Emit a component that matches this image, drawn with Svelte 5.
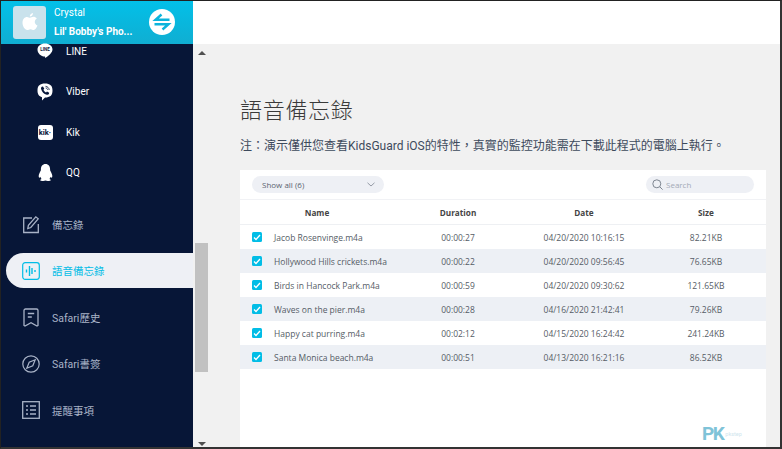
<script>
	const apps = [
		{ name: "LINE", icon: "line" },
		{ name: "Viber", icon: "viber" },
		{ name: "Kik", icon: "kik" },
		{ name: "QQ", icon: "qq" }
	];
	const tools = [
		{ name: "備忘錄", icon: "note" },
		{ name: "語音備忘錄", icon: "voice", active: true },
		{ name: "Safari歷史", icon: "history" },
		{ name: "Safari書簽", icon: "compass" },
		{ name: "提醒事項", icon: "list" }
	];
	const files = [
		["Jacob Rosenvinge.m4a", "00:00:27", "04/20/2020 10:16:15", "82.21KB"],
		["Hollywood Hills crickets.m4a", "00:00:22", "04/20/2020 09:56:45", "76.65KB"],
		["Birds in Hancock Park.m4a", "00:00:59", "04/20/2020 09:30:62", "121.65KB"],
		["Waves on the pier.m4a", "00:00:28", "04/16/2020 21:42:41", "79.26KB"],
		["Happy cat purring.m4a", "00:02:12", "04/15/2020 16:24:42", "241.24KB"],
		["Santa Monica beach.m4a", "00:00:51", "04/13/2020 16:21:16", "86.52KB"]
	];
</script>

<div class="window">
	<aside class="sidebar">
		<header class="device">
			<div class="device-logo">
				<svg width="16" height="18" viewBox="0 0 16 18"><path fill="#fff" d="M11 0c.1 1.600-1.300 3.600-3.200 3.600C7.600 2 9.200.2 11 0zM8 4.700c.8 0 1.900-.9 3.400-.9 1.200 0 2.600.6 3.400 1.800-3 1.800-2.500 5.700.7 7-.8 2-2.200 4.400-3.800 4.400-1.200 0-1.600-.8-3.200-.8s-2 .8-3.200.8C2.800 17 .5 13 .5 9.700.5 6 2.800 3.900 5 3.900c1.300 0 2.300.8 3 .8z"/></svg>
			</div>
			<div class="device-text">
				<div class="device-user">Crystal</div>
				<div class="device-name">Lil' Bobby's Pho...</div>
			</div>
			<div class="switch">
				<svg width="26" height="26" viewBox="0 0 26 26">
					<circle cx="13" cy="13" r="13" fill="#fff" />
					<path d="M20.500 10.800H6.500L12.500 5.500M5.500 15.200h14L13.500 20.500" fill="none" stroke="#0cb4dc" stroke-width="2.400" />
				</svg>
			</div>
		</header>
		<nav class="nav">
			<div class="apps">
				{#each apps as app}
					<div class="app">
						<span class="app-icon">
							{#if app.icon === "line"}
								<svg width="16" height="16" viewBox="0 0 16 16"><path fill="#fff" d="M8 .5c4.200 0 7.500 2.600 7.500 5.900 0 3-3.500 6-7 8.300-.6.300-.6-.4-.5-1.200C3.800 13.300.500 10.200.500 6.400.5 3.100 3.800.5 8 .5z"/><text x="8" y="8.200" class="line-text">LINE</text></svg>
							{:else if app.icon === "viber"}
								<svg width="16" height="18" viewBox="0 0 16 18"><path fill="#fff" d="M8 .5c5 0 7.500 2 7.500 7s-2.500 7-7.500 7l-3 3v-3.300C2 13.200.5 11.500.5 7.500.5 2.500 3 .5 8 .5z"/><path fill="#07173a" d="M4.800 3.800l1.200-.3 1.300 2.300-.9 1c.5 1.200 1.400 2.100 2.600 2.600l1-.9 2.200 1.300-.3 1.200c-.4.700-1.300.9-2.100.7C6.800 11 4.900 9.100 4.100 6c-.2-.9 0-1.800.7-2.200z"/><path fill="none" stroke="#07173a" stroke-width=".8" d="M8.500 3.300c2 .2 3.500 1.500 3.700 3.700M8.700 4.900c1 .1 1.800.9 1.900 1.900"/></svg>
							{:else if app.icon === "kik"}
								<span class="kik">kik·</span>
							{:else if app.icon === "qq"}
								<svg width="15" height="18" viewBox="0 0 15 18"><path fill="#fff" d="M7.500 0c3 0 4.600 2.300 4.600 5.300 0 .7 0 1 .2 1.500.9 1.600 2 3.700 2 5.300 0 1-.3 1.600-.7 1.600-.3 0-.7-.3-1-.9-.2.900-.6 1.700-1.200 2.300.9.400 1.400.8 1.400 1.200 0 .5-1.400.7-3 .7-1 0-1.800-.2-2.300-.5-.5.300-1.300.5-2.300.5-1.600 0-3-.2-3-.7 0-.4.500-.8 1.400-1.200-.6-.6-1-1.400-1.200-2.300-.3.600-.7.900-1 .9-.4 0-.7-.6-.7-1.600 0-1.600 1.100-3.700 2-5.300.2-.5.200-.8.200-1.500C2.900 2.300 4.500 0 7.500 0z"/></svg>
							{/if}
						</span>
						<span class="app-name">{app.name}</span>
					</div>
				{/each}
			</div>
			<div class="tools">
				{#each tools as tool}
					<div class="tool" class:active={tool.active}>
						<span class="tool-icon">
							{#if tool.icon === "note"}
								<svg width="18" height="19" viewBox="0 0 18 19" fill="none" stroke="currentColor" stroke-width="1.300"><path d="M10 3H1.700v14.500h14.600V9"/><path d="M5.800 13.500l.6-3.100L13.800 1.800l2.400 2-7.400 8.700z"/></svg>
							{:else if tool.icon === "voice"}
								<svg width="18" height="18" viewBox="0 0 18 18" fill="none" stroke="currentColor"><rect x=".7" y=".7" width="16.600" height="16.600" rx="2.500" stroke-width="1.200"/><path stroke-width="1.400" d="M4.500 7.500v3M7.500 4v10M10 6v6M13 8v2"/></svg>
							{:else if tool.icon === "history"}
								<svg width="16" height="19" viewBox="0 0 16 19" fill="none" stroke="currentColor" stroke-width="1.300"><path d="M2.500 1h11A1.500 1.500 0 0 1 15 2.500V17.500l-1 .6-6-3.300-6 3.300-1-.6V2.500A1.500 1.500 0 0 1 2.500 1z"/><path d="M4.800 5.500h6.400M4.800 9h4"/></svg>
							{:else if tool.icon === "compass"}
								<svg width="18" height="18" viewBox="0 0 18 18" fill="none" stroke="currentColor" stroke-width="1.200"><circle cx="9" cy="9" r="8.200"/><path d="M13.200 4.800L10.800 10.800 4.800 13.200 7.200 7.200z"/></svg>
							{:else if tool.icon === "list"}
								<svg width="18" height="18" viewBox="0 0 18 18" fill="none" stroke="currentColor" stroke-width="1.300"><rect x=".7" y=".7" width="16.600" height="16.600"/><path d="M4 5h2M8 5h6M4 9h2M8 9h6M4 13h2M8 13h6"/></svg>
							{/if}
						</span>
						<span class="tool-name">{tool.name}</span>
					</div>
				{/each}
			</div>
		</nav>
	</aside>

	<main class="main">
		<div class="topbar"></div>
		<div class="body">
			<div class="scrollbar">
				<span class="arrow up"></span>
				<div class="track"><div class="thumb"></div></div>
				<span class="arrow down"></span>
			</div>
			<div class="content">
				<h1>語音備忘錄</h1>
				<p class="notice">注：演示僅供您查看KidsGuard iOS的特性，真實的監控功能需在下載此程式的電腦上執行。</p>
				<section class="card">
					<div class="toolbar">
						<div class="select">
							<span>Show all (6)</span>
							<svg width="8" height="5" viewBox="0 0 8 5"><path d="M.5.800L4 4 7.500.800" fill="none" stroke="#8a919c" stroke-width=".9"/></svg>
						</div>
						<div class="search">
							<svg width="11" height="11" viewBox="0 0 11 11" fill="none" stroke="#7d8590"><circle cx="4.800" cy="4.800" r="4"/><path d="M7.800 7.800l2.800 2.800"/></svg>
							<span>Search</span>
						</div>
					</div>
					<div class="row head">
						<span class="c-name">Name</span>
						<span class="c-dur">Duration</span>
						<span class="c-date">Date</span>
						<span class="c-size">Size</span>
					</div>
					{#each files as f}
						<div class="row item">
							<span class="c-name">
								<span class="check">
									<svg width="8" height="7" viewBox="0 0 8 7"><path d="M1 3.500l2 2L7 1" fill="none" stroke="#fff" stroke-width="1.300"/></svg>
								</span>
								<span class="file">{f[0]}</span>
							</span>
							<span class="c-dur">{f[1]}</span>
							<span class="c-date">{f[2]}</span>
							<span class="c-size">{f[3]}</span>
						</div>
					{/each}
					<div class="watermark"><b>PK</b><small>pkstep</small></div>
				</section>
			</div>
		</div>
	</main>
</div>

<style>
	:global(body) {
		margin: 0;
		background: #fff;
	}
	.window {
		display: flex;
		width: 782px;
		height: 449px;
		box-sizing: border-box;
		border-top: 1px solid #222;
		border-left: 1px solid #222;
		border-right: 2px solid #333;
		border-bottom: 2px solid #333;
		overflow: hidden;
		font-family: "Open Sans", "Noto Sans CJK TC", sans-serif;
	}
	.sidebar {
		width: 192px;
		flex: none;
		display: flex;
		flex-direction: column;
		background: #071637;
		overflow: hidden;
	}
	.device {
		height: 43px;
		box-sizing: border-box;
		flex: none;
		display: flex;
		align-items: center;
		padding: 0 0 1px 12px;
		background: linear-gradient(180deg, #02c0e8, #10aed2);
		color: #fff;
		font-family: Roboto, "Noto Sans CJK TC", sans-serif;
	}
	.device-logo {
		width: 33px;
		height: 33px;
		display: flex;
		align-items: center;
		justify-content: center;
		border-radius: 3px;
		background: #c9e2ec;
	}
	.device-text {
		width: 95px;
		margin-left: 8px;
		font-size: 10px;
		line-height: 19px;
	}
	.device-name {
		font-weight: 700;
		white-space: nowrap;
	}
	.switch {
		display: flex;
	}
	.nav {
		flex: 1;
		color: #fff;
		font-family: Roboto, "Noto Sans CJK TC", sans-serif;
		font-size: 10px;
	}
	.apps {
		margin-top: -13px;
		padding-left: 36px;
	}
	.app {
		height: 40.500px;
		display: flex;
		align-items: center;
	}
	.app-icon {
		width: 16px;
		display: flex;
		align-items: center;
		justify-content: center;
	}
	.app-name {
		margin-left: 13px;
	}
	.line-text {
		font-size: 4.500px;
		font-weight: 700;
		fill: #07173a;
		text-anchor: middle;
	}
	.kik {
		width: 15px;
		height: 15px;
		display: flex;
		align-items: center;
		justify-content: center;
		border-radius: 3px;
		background: #fff;
		color: #07173a;
		font-size: 7.500px;
		font-weight: 700;
	}
	.tools {
		margin-top: 13.500px;
		padding-left: 5px;
	}
	.tool {
		height: 35px;
		display: flex;
		align-items: center;
		margin-bottom: 11.500px;
		padding-left: 16px;
		border-radius: 18px 0 0 18px;
		color: #a9b3c7;
		font-size: 10.500px;
	}
	.tool.active {
		background: #eef0f5;
		color: #02bde6;
	}
	.tool-icon {
		width: 18px;
		display: flex;
		justify-content: center;
	}
	.tool-name {
		margin-left: 12px;
	}
	.main {
		flex: 1;
		display: flex;
		flex-direction: column;
		min-width: 0;
	}
	.topbar {
		height: 43px;
		flex: none;
		background: #fff;
	}
	.body {
		flex: 1;
		display: flex;
		min-height: 0;
		background: #f1f1f1;
	}
	.scrollbar {
		width: 13px;
		flex: none;
		margin-left: 2px;
		display: flex;
		flex-direction: column;
		align-items: center;
	}
	.arrow {
		width: 0;
		height: 0;
		flex: none;
		border-left: 4px solid transparent;
		border-right: 4px solid transparent;
	}
	.arrow.up {
		margin-top: 7px;
		border-bottom: 4px solid #505050;
	}
	.arrow.down {
		margin-bottom: 1px;
		border-top: 4px solid #505050;
	}
	.track {
		flex: 1;
		width: 100%;
		padding-top: 188px;
		box-sizing: border-box;
	}
	.thumb {
		height: 129px;
		background: #c1c1c1;
	}
	.content {
		flex: 1;
		min-width: 0;
		padding: 0 14px 0 32px;
		overflow: hidden;
	}
	h1 {
		margin: 50px 0 0;
		font-size: 22px;
		line-height: 30px;
		font-weight: 300;
		letter-spacing: .7px;
		color: #3a3a3a;
	}
	.notice {
		margin: 13px 0 0;
		font-family: Roboto, "Noto Sans CJK TC", sans-serif;
		font-size: 12px;
		line-height: 18px;
		color: #3d4a5c;
		white-space: nowrap;
	}
	.card {
		position: relative;
		height: 300px;
		margin-top: 15px;
		background: #fff;
	}
	.toolbar {
		height: 29px;
		display: flex;
		align-items: center;
		justify-content: space-between;
		padding: 0 12px;
		border-bottom: 1px solid #f1f2f5;
	}
	.select {
		width: 132px;
		height: 17px;
		box-sizing: border-box;
		display: flex;
		align-items: center;
		justify-content: space-between;
		padding: 0 9px 0 10px;
		border-radius: 9px;
		background: #eef0f5;
		color: #5b6470;
		font-size: 8px;
	}
	.search {
		width: 108px;
		height: 17px;
		box-sizing: border-box;
		display: flex;
		align-items: center;
		gap: 3px;
		padding-left: 6px;
		border-radius: 9px;
		background: #eef0f5;
		color: #a3aab5;
		font-size: 8px;
	}
	.row {
		height: 24px;
		display: grid;
		grid-template-columns: 154px 128px 124px 120px;
		align-items: center;
		font-size: 8.500px;
		color: #555c66;
		text-align: center;
	}
	.head {
		border-bottom: 1px solid #eef0f3;
		font-size: 8.200px;
		font-weight: 700;
		color: #444;
	}
	.item:nth-child(even) {
		background: #edf0f5;
	}
	.item .c-name {
		display: flex;
		align-items: center;
		padding-left: 12px;
		text-align: left;
	}
	.check {
		width: 10px;
		height: 10px;
		display: flex;
		align-items: center;
		justify-content: center;
		border-radius: 1.500px;
		background: #02bde6;
	}
	.file {
		margin-left: 12px;
		white-space: nowrap;
	}
	.watermark {
		position: absolute;
		left: 462px;
		top: 254px;
		display: flex;
		align-items: center;
		color: #7fc3d8;
		font-family: Roboto, sans-serif;
	}
	.watermark b {
		font-size: 19px;
		line-height: 20px;
		letter-spacing: -1.500px;
	}
	.watermark small {
		margin-left: 2px;
		font-size: 5.500px;
		color: #d0e6ee;
	}
</style>
